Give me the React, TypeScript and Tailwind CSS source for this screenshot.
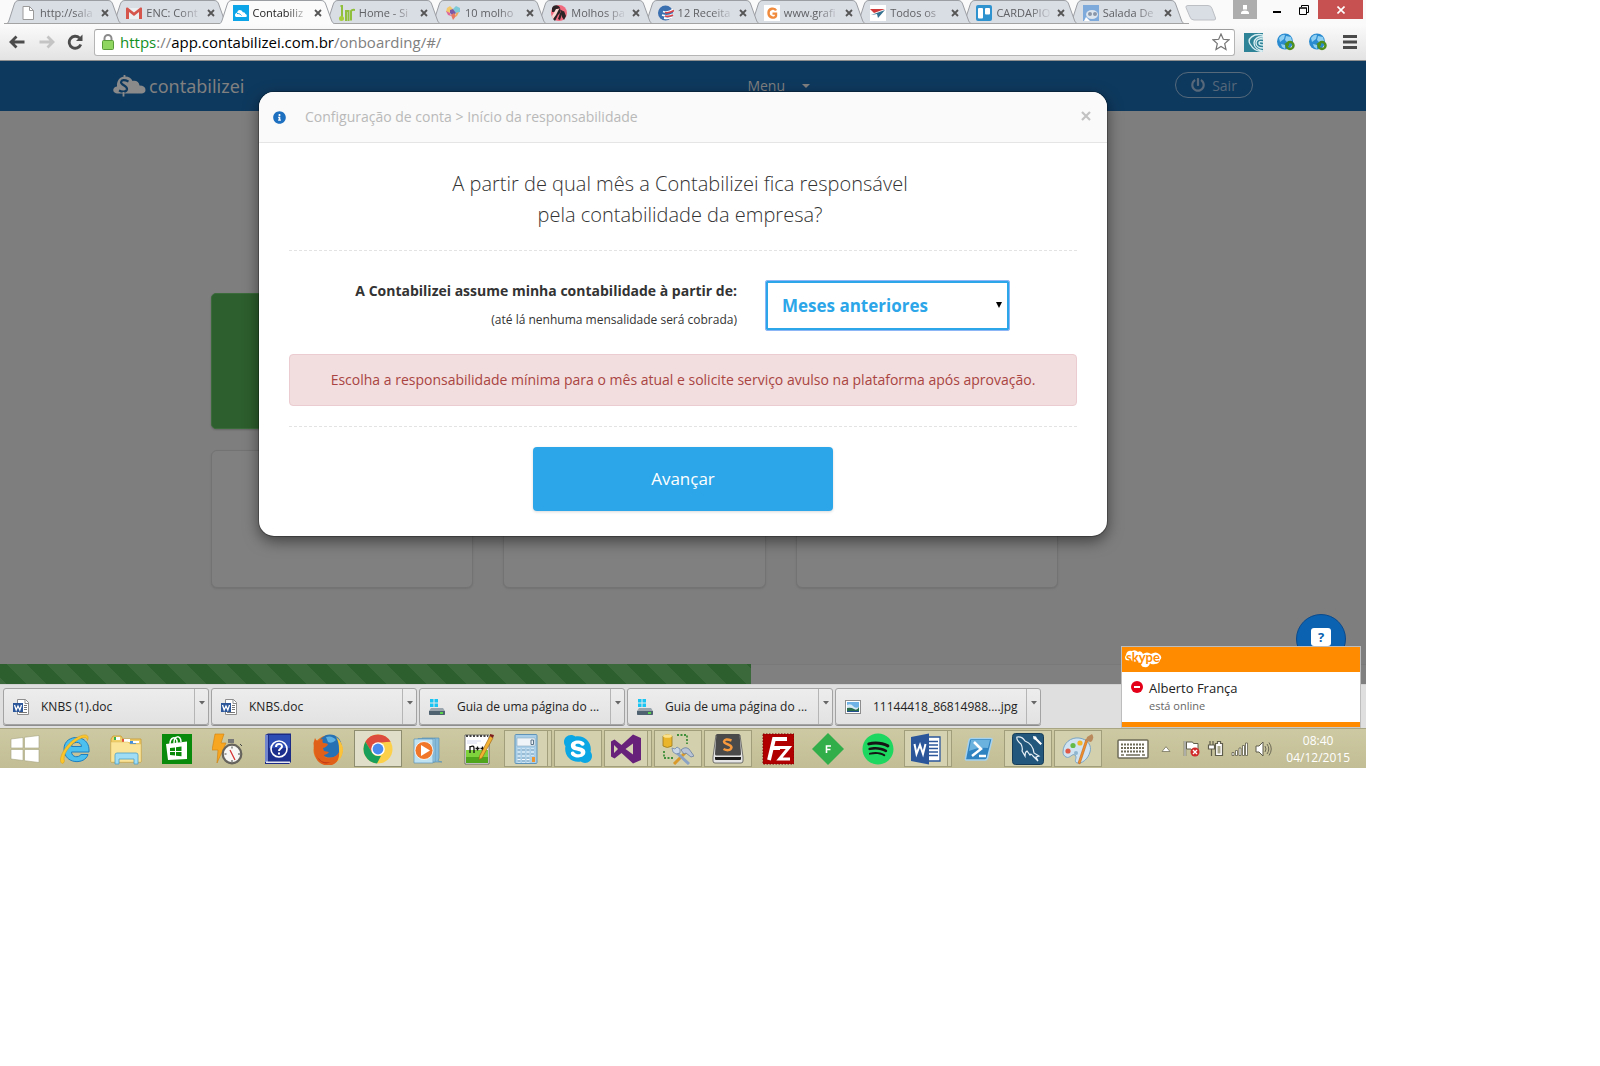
import type { ReactNode } from "react";
import { FaInfoCircle, FaPowerOff, FaSkype, FaSpotify } from "react-icons/fa";

/* ---------- favicons ---------- */

const Fav = ({ children }: { children: ReactNode }) => (
  <svg viewBox="0 0 16 16" className="size-4 shrink-0" aria-hidden="true">
    {children}
  </svg>
);

const favPage = (
  <Fav>
    <path d="M3 1.5h6.5L13.500 5.500v9H3z" fill="#fff" stroke="#9a9a9a" />
    <path d="M9.500 1.500v4h4" fill="none" stroke="#9a9a9a" />
  </Fav>
);
const favGmail = (
  <Fav>
    <path d="M1 3h14v11H1z" fill="#eceff1" />
    <path d="M0 14V3.500C0 2.500 1 2.200 2 2.800L8 7.500l6-4.700c1-.600 2-.300 2 .700V14h-3V7L8 11 3 7v7z" fill="#d5544c" />
  </Fav>
);
const favCloud = (
  <Fav>
    <path d="M0 0h16v16H0z" fill="#0da4e8" />
    <path d="M2 10.500C2 8 4 8 4.300 7.600 4.200 5.500 6.500 4 8.500 5.500c.5.500 1 1 1.300 1.700 1.700-.3 2.400.8 2.600 1.700C14 9 14.500 12 12.500 12H3.500c-.800 0-1.500-.6-1.500-1.500z" fill="#fff" />
    <path d="M4 8.500c2 0 3 .3 4.500 2" stroke="#0da4e8" fill="none" />
  </Fav>
);
const favBr = (
  <Fav>
    <path d="M3.500 1h-2M3 0v12M7 5v11M7 6h2.500v10M12 15.500V6q1-1.500 4-1" stroke="#8fbf3c" strokeWidth="2" fill="none" />
    <circle cx="2.500" cy="13.500" r="2.500" fill="#a6ce39" />
  </Fav>
);
const favHeart = (
  <Fav>
    <path d="M2 3l3-2 3 3-3 4-4-1z" fill="#f3c86a" />
    <path d="M8 4l3-3 4 2v4l-4 1z" fill="#7cc9d8" />
    <path d="M1 6l4 2 1 3-3-1z" fill="#e0679a" />
    <path d="M5 5l3-1 3 4-3 3-3-3z" fill="#7a5aa8" />
    <path d="M6 10l3-2 2 3-3 4z" fill="#e77763" />
    <path d="M11 8l3-1-2 4-2 1z" fill="#f0a85c" />
  </Fav>
);
const favWoman = (
  <Fav>
    <circle cx="8" cy="8" r="8" fill="#f0697c" />
    <path d="M1 3C3-1 8 0 9 3L6 4 4 7 1 7zM10 7l3-1 2 5-2 4-2-3z" fill="#2c2326" />
    <path d="M9 3l-4 4-3 7 2 2 3-6 3-3zM10 5l2 1-3 9-2-1z" fill="#2c2326" />
    <path d="M5 4l3 0-3 6-3 4-1-3z" fill="#fbd9d3" />
  </Fav>
);
const favGlobe = (
  <Fav>
    <circle cx="7.500" cy="8" r="7.500" fill="#3a6fb0" />
    <path d="M5 6.500q5 2 10-2M4 10q6 2 11-1M6 13q5 1 8-1" stroke="#fff" strokeWidth="1.800" fill="none" />
    <path d="M7 7.500q4 1 9-2M7 11q4 1 8-1" stroke="#d8434a" strokeWidth="1.600" fill="none" />
  </Fav>
);
const favG = (
  <Fav>
    <path d="M0 0h16v16H0z" fill="#fff" />
    <path d="M12 5.500C11 3 4.500 2.500 4.500 8c0 5.500 7 5.500 7.500 3V8.600H8.500" stroke="#f08a3c" strokeWidth="2.400" fill="none" />
  </Fav>
);
const favWing = (
  <Fav>
    <path d="M0 0h16v16H0z" fill="#fff" />
    <path d="M0 4h15L4 8z" fill="#d23b3b" />
    <path d="M1 10l14-5-7 8-1-4z" fill="#34708f" />
  </Fav>
);
const favTrello = (
  <Fav>
    <rect width="16" height="16" rx="2" fill="#2f93cf" />
    <rect x="2" y="3" width="5" height="10.500" rx="1" fill="#fff" />
    <rect x="9" y="3" width="5" height="6.500" rx="1" fill="#fff" />
  </Fav>
);
const favRobot = (
  <Fav>
    <path d="M0 0h16v16H0z" fill="#7eaadb" />
    <ellipse cx="9" cy="9.500" rx="6" ry="4.500" fill="#dce4ee" />
    <circle cx="7" cy="9" r="2" fill="#8b97a8" />
    <circle cx="12" cy="9" r="2" fill="#8b97a8" />
    <path d="M1 16l2-4 4 4z" fill="#fff" />
  </Fav>
);

/* ---------- browser tabs ---------- */

type Tab = { title: string; icon: ReactNode; z: string; active?: boolean };

const tabs: Tab[] = [
  { title: "http://sala", icon: favPage, z: "z-[11]" },
  { title: "ENC: Cont", icon: favGmail, z: "z-[10]" },
  { title: "Contabiliz", icon: favCloud, z: "z-[12]", active: true },
  { title: "Home - Si", icon: favBr, z: "z-[9]" },
  { title: "10 molho", icon: favHeart, z: "z-[8]" },
  { title: "Molhos pa", icon: favWoman, z: "z-[7]" },
  { title: "12 Receita", icon: favGlobe, z: "z-[6]" },
  { title: "www.grafi", icon: favG, z: "z-[5]" },
  { title: "Todos os", icon: favWing, z: "z-[4]" },
  { title: "CARDAPIO", icon: favTrello, z: "z-[3]" },
  { title: "Salada De", icon: favRobot, z: "z-[2]" },
];

function TabStrip() {
  return (
    <div className="flex h-6 items-start justify-between bg-[#fafafa]">
      <div className="flex min-w-0 flex-1 pl-1">
        <div className="flex max-w-[1169px] flex-1">
          {tabs.map((t) => (
            <div key={t.title} className={`relative flex h-6 min-w-0 flex-1 ${t.z}`}>
              <svg viewBox="0 0 122 24" className="absolute top-0 left-0 h-6 w-[122px]" aria-hidden="true">
                <path
                  d="M0 24.500C4 24 4.500 22 5.500 19L10 5C11 2 12 .5 15 .5H104C107 .5 108 2 109 5L114 19C115 22 116 24 120 24.500"
                  fill={t.active ? "#fbfbfb" : "#d9dde4"}
                  stroke="#9b9ea3"
                />
                {!t.active && <path d="M0 23.500h122" stroke="#a3a3a3" />}
              </svg>
              <div className="relative flex min-w-0 flex-1 items-center pt-0.5 pl-4">
                {t.icon}
                <button
                  className={`ml-1 w-14 shrink-0 text-left text-[11px] leading-5 whitespace-nowrap [mask-image:linear-gradient(to_right,black_60%,transparent_100%)] ${t.active ? "text-[#222]" : "text-[#5f6164]"}`}
                >
                  {t.title}
                </button>
                <button aria-label="Fechar guia" className="ml-[5px]">
                  <svg viewBox="0 0 8 8" className="size-2">
                    <path d="M1 1l6 6M7 1L1 7" stroke="#555" strokeWidth="1.800" />
                  </svg>
                </button>
              </div>
            </div>
          ))}
        </div>
        <button aria-label="Nova guia" className="ml-3 self-start pt-[5px]">
          <svg viewBox="0 0 32 16" className="h-4 w-8">
            <path d="M3 .5H23q3 0 4 3L30.500 13q.5 2-1.500 2H9q-3 0-4-3L1 2.500Q.5.500 3 .5z" fill="#d9dde4" stroke="#bcbfc4" />
          </svg>
        </button>
      </div>
      <div className="flex shrink-0 items-start pr-[3px]">
        <button aria-label="Perfil" className="flex h-[19px] w-6 items-center justify-center bg-[#adadad]">
          <svg viewBox="0 0 10 10" className="size-[10px]">
            <path d="M3 0h4v4.500H3zM1 8q0-2.500 4-2.500T9 8v1H1z" fill="#fff" />
          </svg>
        </button>
        <button aria-label="Minimizar" className="ml-4 flex h-[19px] w-2 items-end pb-[6px]">
          <span className="h-0.5 w-2 bg-black" />
        </button>
        <button aria-label="Restaurar" className="ml-[18px] flex h-[19px] items-center">
          <svg viewBox="0 0 10 10" className="size-[10px]">
            <path d="M2.500 2V.5h7v7H8M.5 3h7v6.500h-7z" fill="none" stroke="#000" />
            <path d="M0 3h8" stroke="#000" />
          </svg>
        </button>
        <button aria-label="Fechar" className="ml-[9px] flex h-[19px] w-[45px] items-center justify-center bg-[#c75050]">
          <svg viewBox="0 0 8 8" className="size-2">
            <path d="M.5.500l7 7M7.500.500l-7 7" stroke="#fff" strokeWidth="1.600" />
          </svg>
        </button>
      </div>
    </div>
  );
}

const GlobeExt = () => (
  <svg viewBox="0 0 20 18" className="h-[18px] w-5" aria-hidden="true">
    <circle cx="9" cy="8.500" r="8" fill="#2a8bd0" />
    <path d="M3 5q3-4 6-3l-1 4-4 3zM10 3l5 1 1 4-4 2-3-3zM5 11l4 1v4l-3-2z" fill="#8fd0f2" />
    <circle cx="14" cy="12.500" r="3.500" fill="none" stroke="#4f8f1f" strokeWidth="2.500" />
    <path d="M8 11l5-2v4z" fill="#4f8f1f" />
  </svg>
);

function Toolbar() {
  return (
    <div className="flex h-[37px] items-center border-b border-[#8f8f8f] bg-linear-to-b from-[#fbfbfb] to-[#e3e3e3] pr-[9px] pl-[9px]">
      <button aria-label="Voltar">
        <svg viewBox="0 0 16 14" className="h-[14px] w-4">
          <path d="M15.500 7H2M7.500 1.500L2 7l5.500 5.500" fill="none" stroke="#4c4c4c" strokeWidth="2.800" />
        </svg>
      </button>
      <button aria-label="Avançar página" className="ml-[14px]">
        <svg viewBox="0 0 16 14" className="h-[14px] w-4">
          <path d="M.5 7H14M8.500 1.500L14 7l-5.500 5.500" fill="none" stroke="#c4c4c4" strokeWidth="2.800" />
        </svg>
      </button>
      <button aria-label="Recarregar" className="ml-3">
        <svg viewBox="0 0 16 16" className="size-4">
          <path d="M13.800 10.500A6 6 0 1 1 12.500 4" fill="none" stroke="#4c4c4c" strokeWidth="2.800" />
          <path d="M15.500.500V7H9z" fill="#4c4c4c" />
        </svg>
      </button>
      <div className="ml-[11px] flex h-[27px] min-w-0 flex-1 items-center rounded-[3px] border border-[#b5b5b5] border-t-[#9c9c9c] bg-white pr-1 pl-1.5">
        <svg viewBox="0 0 14 16" className="h-4 w-[14px] shrink-0" aria-hidden="true">
          <path d="M3.500 8V4.500a3.500 3.500 0 0 1 7 0V8" fill="none" stroke="#8b8b8b" strokeWidth="2" />
          <rect x="1.500" y="6.500" width="11" height="9" rx="1" fill="#8ed660" stroke="#5a9b3a" />
        </svg>
        <div className="ml-[5px] min-w-0 flex-1 text-[15px] leading-6 whitespace-nowrap text-[#808080]">
          <span className="text-[#12901f]">https</span>://<span className="text-black">app.contabilizei.com.br</span>/onboarding/#/
        </div>
        <button aria-label="Favoritar">
          <svg viewBox="0 0 18 18" className="size-[18px]">
            <path d="M9 1l2.300 5.300 5.700.5-4.300 3.800 1.300 5.900L9 13.400l-5 3.100 1.300-5.900L1 6.800l5.700-.5z" fill="#fff" stroke="#757575" strokeWidth="1.200" />
          </svg>
        </button>
      </div>
      <button aria-label="Extensão" className="ml-[9px]">
        <svg viewBox="0 0 19 19" className="size-[19px]">
          <path d="M0 0h19v19H0z" fill="#2f8396" />
          <path d="M19 2C9 0 3 6 6 11s8 8 13 7c-5-1-9-4-9-8s4-7 9-6zM19 6c-4-1-7 1-7 4s3 5 7 5" fill="none" stroke="#d8eef2" strokeWidth="1.400" />
          <path d="M19 9q-4-1-4 1t4 2" fill="none" stroke="#d8eef2" strokeWidth="1.400" />
        </svg>
      </button>
      <button aria-label="Extensão web 1" className="ml-[13px]"><GlobeExt /></button>
      <button aria-label="Extensão web 2" className="ml-3"><GlobeExt /></button>
      <button aria-label="Menu do navegador" className="ml-[15px]">
        <svg viewBox="0 0 14 14" className="size-[14px]">
          <path d="M0 1.500h14M0 7h14M0 12.500h14" stroke="#4a4a4a" strokeWidth="2.800" />
        </svg>
      </button>
    </div>
  );
}

/* ---------- web page ---------- */

function NavBar() {
  return (
    <header className="flex h-[50px] items-center bg-[#0e395e] text-[14px] text-[#808080]">
      <a href="#inicio" className="ml-[113px] flex items-center">
        <svg viewBox="0 0 34 22" className="h-[22px] w-[34px]" aria-hidden="true">
          <path d="M5.500 18.500C1.500 18.500 0 16.500.3 14.500.7 12.500 2.500 11.500 4 11.500 3.500 5.500 7 1.500 12 1.500c4 0 6.500 2 7.500 4.500 4-.8 6.500 1.500 7 4.500 4 0 6 1.500 6 4.500 0 2.300-1.500 3.500-4 3.500H16z" fill="#8a8a8a" />
          <path d="M15.500 6.500Q9 3.500 8 7.200c-.3 3 6.500 3.300 6 7-.5 3-5 2.800-8 1.300" fill="none" stroke="#0e395e" strokeWidth="2.200" />
          <path d="M11.500 0v3M10.500 17v4.500" stroke="#8a8a8a" strokeWidth="1.800" />
        </svg>
        <span className="ml-0.5 font-['Noto_Sans',sans-serif] text-[18px] leading-6">contabilizei</span>
      </a>
      <div className="flex-1" />
      <button className="mr-[365px] flex items-center text-[14px] leading-5">
        Menu
        <svg viewBox="0 0 8 4" className="ml-[17px] h-1 w-2" aria-hidden="true">
          <path d="M0 0h8L4 4z" fill="#808080" />
        </svg>
      </button>
      <button className="mr-[113px] mb-0.5 flex h-[26px] w-[78px] items-center justify-center gap-[7px] rounded-full border border-[#55697b] text-[14px] text-[#56687a]">
        <FaPowerOff className="size-[14px]" />
        Sair
      </button>
    </header>
  );
}

function ResponsibilityDialog() {
  return (
    <div
      role="dialog"
      aria-labelledby="dialog-title"
      className="w-[848px] overflow-hidden rounded-[15px] bg-white shadow-[0_0_0_1px_rgba(0,0,0,0.25),0_5px_15px_rgba(0,0,0,0.5)]"
    >
      <div className="flex items-center border-b border-[#e5e5e5] bg-[#fafafa] pt-[15px] pr-[15px] pb-[15px] pl-[14px] text-[14px] leading-5 text-[#b9b9b9]">
        <FaInfoCircle className="size-[13px] text-[#1d6fc0]" />
        <h2 id="dialog-title" className="ml-[19px] flex-1">Configuração de conta &gt; Início da responsabilidade</h2>
        <button aria-label="Fechar janela" className="mr-px mb-0.5">
          <svg viewBox="0 0 10 10" className="size-[10px]">
            <path d="M1 1l8 8M9 1L1 9" stroke="#c2c2c2" strokeWidth="2.200" />
          </svg>
        </button>
      </div>
      <form className="px-[30px] pt-[25px] pb-[25px]" onSubmit={(e) => e.preventDefault()}>
        <p className="pr-1.5 text-center text-[20px] leading-[31px] font-light text-[#333]">
          A partir de qual mês a Contabilizei fica responsável
          <br />
          pela contabilidade da empresa?
        </p>
        <div className="mt-5 border-t border-dashed border-[#e3e3e3]" />
        <div className="mt-[30px] flex items-start gap-[29px]">
          <label htmlFor="mes" className="flex w-[448px] flex-col items-end text-[#333]">
            <span className="text-[14px] leading-5 font-bold">A Contabilizei assume minha contabilidade à partir de:</span>
            <span className="mt-[9px] text-[12px] leading-5">(até lá nenhuma mensalidade será cobrada)</span>
          </label>
          <div className="relative">
            <select
              id="mes"
              defaultValue="Meses anteriores"
              className="block h-[49px] w-[243px] appearance-none rounded-[1px] border-2 border-[#2ca6e8] bg-white pl-[14px] text-[17px] font-bold text-[#2ca6e8] outline-1 outline-[#8cb6f5]"
            >
              <option>Meses anteriores</option>
            </select>
            <svg viewBox="0 0 6 6" className="pointer-events-none absolute top-[21px] right-[7px] size-1.5" aria-hidden="true">
              <path d="M0 0h6L3 6z" fill="#000" />
            </svg>
          </div>
        </div>
        <div className="mt-6 rounded-[4px] border border-[#ebccd1] bg-[#f2dede] py-[15px] text-center text-[14px] leading-5 text-[#a94442]">
          Escolha a responsabilidade mínima para o mês atual e solicite serviço avulso na plataforma após aprovação.
        </div>
        <div className="mt-5 border-t border-dashed border-[#e3e3e3]" />
        <button className="mx-auto mt-5 block h-16 w-[300px] rounded-[4px] bg-[#2ca6e8] text-[17px] text-white shadow-[0_1px_3px_rgba(0,0,0,0.15)]">
          Avançar
        </button>
      </form>
    </div>
  );
}

const dimCard = "h-[138px] flex-1 rounded-[6px] border border-[#737373] bg-[#808080] shadow-[0_1px_2px_rgba(0,0,0,0.1)]";

function WebPage() {
  return (
    <div className="relative bg-[#7e7e7e]">
      <NavBar />
      <div className="px-[211px] pt-[182px]">
        <div className="w-[262px] rounded-[5px] border border-[#3b6a3b] bg-[#2d5e2d] pt-[134px] shadow-[0_1px_2px_rgba(0,0,0,0.2)]" />
        <div className="mt-[21px] mr-[97px] flex gap-[30px]">
          <div className={dimCard} />
          <div className={dimCard} />
          <div className={dimCard} />
        </div>
      </div>
      <div className="mt-[76px] flex h-5 border-t border-[#797979] bg-[#808080]">
        <div className="-mt-px w-[55%] bg-[#2d5e2d] bg-[linear-gradient(45deg,rgba(255,255,255,0.07)_25%,transparent_25%,transparent_50%,rgba(255,255,255,0.07)_50%,rgba(255,255,255,0.07)_75%,transparent_75%)] bg-size-[40px_40px] bg-position-[7px_0px]" />
      </div>
      <button
        aria-label="Ajuda"
        className="absolute right-5 bottom-5 flex size-[50px] items-center justify-center rounded-full border border-[#0a4a8c] bg-[#0a62b0] pb-[5px]"
      >
        <span className="rounded-[3px] bg-white px-[7px] text-[13px] leading-[18px] font-bold text-[#0a62b0]">?</span>
      </button>
      <div className="absolute inset-x-0 top-[31px] flex justify-center">
        <ResponsibilityDialog />
      </div>
    </div>
  );
}

/* ---------- downloads ---------- */

const docIcon = (
  <svg viewBox="0 0 16 16" className="size-4 shrink-0" aria-hidden="true">
    <path d="M4.500.500h8l3 3v12h-11z" fill="#fff" stroke="#8d8d8d" />
    <path d="M12 .5v4h3.500" fill="none" stroke="#8d8d8d" />
    <path d="M11 6.500h3M11 8.500h3M11 10.500h3M6 13.500h8" stroke="#777" />
    <rect x="0" y="4" width="10" height="9" fill="#2b579a" />
    <path d="M1.500 6l1.700 5L5 7l1.800 4 1.700-5" fill="none" stroke="#fff" strokeWidth="1.300" />
  </svg>
);
const driveIcon = (
  <svg viewBox="0 0 16 16" className="size-4 shrink-0" aria-hidden="true">
    <path d="M1 0h3.500v3.500H1zM5.500 0H9v3.500H5.500zM1 4.500h3.500V8H1zM5.500 4.500H9V8H5.500z" fill="#19c5f3" />
    <path d="M2 9h12l2 3v3q0 1-1 1H1q-1 0-1-1v-3z" fill="#9aa5ad" />
    <path d="M0 12h16v3q0 1-1 1H1q-1 0-1-1z" fill="#4f626f" />
    <path d="M11 14h3" stroke="#59d34c" strokeWidth="2" />
  </svg>
);
const photoIcon = (
  <svg viewBox="0 0 16 14" className="h-[14px] w-4 shrink-0" aria-hidden="true">
    <rect x=".5" y=".5" width="15" height="13" fill="#fff" stroke="#8d8d8d" />
    <path d="M2 2h12v10H2z" fill="#6fb3e6" />
    <path d="M2 5q4-2 6 1t6 1v5H2z" fill="#d7e9f5" />
    <path d="M2 8q4-1 7 1t5-2v5H2z" fill="#2a6d4d" />
    <path d="M2 11h12v1H2z" fill="#234e8f" />
  </svg>
);

const downloads = [
  { id: 1, name: "KNBS (1).doc", icon: docIcon },
  { id: 2, name: "KNBS.doc", icon: docIcon },
  { id: 3, name: "Guia de uma página do ...", icon: driveIcon },
  { id: 4, name: "Guia de uma página do ...", icon: driveIcon },
  { id: 5, name: "11144418_86814988....jpg", icon: photoIcon },
];

function DownloadBar() {
  return (
    <div className="flex h-11 items-center gap-0.5 border-t border-[#d2d2d2] bg-[#dfdfdf] pl-[3px]">
      {downloads.map((d) => (
        <div key={d.id} className="flex h-[37px] w-[206px] rounded-[3px] border border-[#a3a3a3] bg-linear-to-b from-[#ededed] to-[#e2e2e2] shadow-[0_1px_0_#8e8e8e]">
          <button className="flex min-w-0 flex-1 items-center gap-3 pl-[9px] text-[12px] leading-4 whitespace-nowrap text-[#222]">
            {d.icon}
            <span>{d.name}</span>
          </button>
          <button aria-label="Opções do download" className="flex w-[14px] justify-center border-l border-[#b5b5b5] pt-3">
            <svg viewBox="0 0 6 4" className="h-1 w-1.5">
              <path d="M0 0h6L3 3.500z" fill="#666" />
            </svg>
          </button>
        </div>
      ))}
    </div>
  );
}

/* ---------- taskbar ---------- */

const Ico = ({ children }: { children: ReactNode }) => (
  <svg viewBox="0 0 32 32" className="size-8 shrink-0" aria-hidden="true">
    {children}
  </svg>
);

type TaskApp = { name: string; icon: ReactNode; width?: string; frame?: "open" | "active" | "stack" };

const apps: TaskApp[] = [
  {
    name: "Iniciar",
    icon: (
      <Ico>
        <path d="M2 6l12-1.500V15H2zM15.500 4.300L30 2.500V15H15.500zM2 16.500h12V27.500L2 26zM15.500 16.500H30V29.500l-14.500-1.800z" fill="#fff" stroke="#a5a280" strokeWidth=".6" />
      </Ico>
    ),
  },
  {
    name: "Internet Explorer",
    icon: (
      <Ico>
        <path d="M30 19H12.500c.3 5.500 7 6 9.500 2.500h7c-3 10.500-24 10-24-5.500C5 .5 30 .5 30 17zM12.500 13.500h10c0-5.500-9.500-5.500-10 0z" fill="#4cc0ee" stroke="#1d7fc0" strokeWidth="1" />
        <path d="M3 30.500C-2 27 6 11 18 4.500c8-4.500 13-3 10.500 3-.5-4-4-3.500-9-1C10 12 3 23 5.500 28q-.5 2.500-2.500 2.500z" fill="#fbc62c" stroke="#d99c10" strokeWidth=".5" />
      </Ico>
    ),
  },
  {
    name: "Explorador de Arquivos",
    width: "w-[51px]",
    icon: (
      <Ico>
        <path d="M1 6l2-3h8l2 3h18v23H1z" fill="#f0cf6a" stroke="#c79b32" strokeWidth=".8" />
        <path d="M4 4h6v3H4z" fill="#35b24a" /><path d="M12 6h6v3h-6z" fill="#e2533d" /><path d="M20 8h6v3h-6z" fill="#3f8ee0" />
        <path d="M6 4h4v3H6zM14 6h6v3h-6zM23 8h6v2h-6z" fill="#fff" />
        <path d="M1 9h17l2 2h11v18H1z" fill="#f9e49a" stroke="#dcb858" strokeWidth=".5" />
        <path d="M5 31V22q0-2 2-2h19q2 0 2 2v9h-4v-5H9v5z" fill="#9fdcf5" stroke="#4d9fc6" strokeWidth=".8" />
      </Ico>
    ),
  },
  {
    name: "Loja",
    width: "w-[52px]",
    icon: (
      <Ico>
        <path d="M1 1h30v30H1z" fill="#0a8a0a" />
        <path d="M5 11l21-2.500V26L7 27z" fill="#fff" />
        <path d="M9 11c0-7 6-8 7-3v2M13 10c0-8 7-8 7-1" fill="none" stroke="#fff" strokeWidth="1.500" />
        <path d="M9 15l5-.6v3.600H9zM15 14.300l5.500-.7V18H15zM9 19h5v3.600l-5-.5zM15 19h5.500v4.300L15 22.700z" fill="#0a8a0a" />
      </Ico>
    ),
  },
  {
    name: "Cronômetro",
    icon: (
      <Ico>
        <path d="M3 1h9l-3 9h5L5 30l1-13H0z" fill="#f7a621" stroke="#d07f0c" strokeWidth=".6" />
        <path d="M16 6h6v4h-6z" fill="#777" />
        <circle cx="20" cy="21" r="9.300" fill="#f6f6f4" stroke="#65635c" strokeWidth="2.200" />
        <path d="M20 21l3 6M20 21l-2-4" stroke="#d53131" strokeWidth="1.300" />
        <path d="M20 13.500v2M20 27v2M12.500 21h2M26 21h2M28 11l2 2" stroke="#444" />
      </Ico>
    ),
  },
  {
    name: "Dicionário",
    icon: (
      <Ico>
        <path d="M3 2l3-1.500h23V29l-2 2H3z" fill="#1c2b86" />
        <path d="M7 2h21v26H7z" fill="#2d4cb4" /><path d="M7 15h21v13H7z" fill="#1d2f8e" />
        <path d="M3 2h3v27H3z" fill="#7185ce" /><path d="M4 28.500h24v1.500H4z" fill="#e8e8f0" />
        <circle cx="17" cy="16" r="8" fill="none" stroke="#fff" strokeWidth="1.600" />
        <path d="M14 14c0-4 6-4 6-.5 0 2-3 2-3 4.500M17 19.500v2" fill="none" stroke="#fff" strokeWidth="2" />
      </Ico>
    ),
  },
  {
    name: "Firefox",
    icon: (
      <Ico>
        <circle cx="16" cy="17" r="14.500" fill="#e8731c" />
        <circle cx="18" cy="13" r="11.500" fill="#2671b4" />
        <path d="M14 4q6-2 10 3-4 4-8 2z" fill="#5fb0e0" />
        <path d="M24 4q7 5 7 14-1 9-9 12 6-7 5-14 0-7-3-12z" fill="#fbc33a" />
        <path d="M1.500 10L3 5q1 3 3 3 2-2 5-2-1 2 0 4 3 0 5 1-1 3-5 4l1 3 5 1q-2 3-5 3 1 4 6 3 7-1 9-6 1 10-7 13-10 2-15-5-3-6-3.500-17z" fill="#e0601a" />
        <path d="M4 22q5 9 15 7-9 5-15-7z" fill="#c53a16" />
      </Ico>
    ),
  },
  {
    name: "Google Chrome",
    frame: "active",
    icon: (
      <Ico>
        <circle cx="16" cy="16" r="14.500" fill="#fdd04a" />
        <path d="M3.400 8.800A14.500 14.500 0 0 1 28.600 8.800L16 9.500 9.700 19.500z" fill="#dc4b3e" />
        <path d="M3.400 8.800L10 19.500q2 3.500 6 3.500h3l-4 7.500A14.500 14.500 0 0 1 3.400 8.800z" fill="#1a9f5b" />
        <path d="M28.600 8.800H16v.8z" fill="#dc4b3e" />
        <circle cx="16" cy="16" r="6.800" fill="#fff" /><circle cx="16" cy="16" r="5.400" fill="#4a8bf0" />
      </Ico>
    ),
  },
  {
    name: "Windows Media Player",
    icon: (
      <Ico>
        <path d="M10 5h17v20l-1 3 4 1H10z" fill="#86bbd9" stroke="#5c93b5" strokeWidth=".7" />
        <path d="M6 5.500h17V29H6z" fill="#9fd0ea" stroke="#5c93b5" strokeWidth=".7" />
        <path d="M2 6h19v24H2z" fill="#bfe2f3" stroke="#5c93b5" strokeWidth=".7" />
        <circle cx="12" cy="17.500" r="9" fill="#f0772a" stroke="#fff" strokeWidth=".8" />
        <path d="M9 12l9 5.500L9 23z" fill="#fff" />
      </Ico>
    ),
  },
  {
    name: "Notepad++",
    icon: (
      <Ico>
        <path d="M3 2h24v29H3z" fill="#fff" stroke="#555" strokeWidth=".8" />
        <path d="M4 17h22v13H4z" fill="#7fd23c" /><path d="M4 24h22v6H4z" fill="#4fa51c" />
        <path d="M4 3h22" stroke="#444" strokeDasharray="2 1.500" strokeWidth="2" />
        <path d="M5 8h14M5 10h10" stroke="#d4d8ee" />
        <path d="M8 20v-7M8 14q4-2 4 1v5M13.500 15.500h4M15.500 13.500v4M18.500 15.500h4M20.500 13.500v4" stroke="#111" strokeWidth="1.300" fill="none" />
        <path d="M28 3l3 2-11 20-3 1.500.5-3.500z" fill="#f1b233" stroke="#9c5f14" strokeWidth=".6" /><path d="M28 1l4 1-1 3-3-2z" fill="#7d1e1e" />
      </Ico>
    ),
  },
  {
    name: "Calculadora",
    frame: "stack",
    icon: (
      <Ico>
        <rect x="5" y="1.500" width="22" height="29" rx="1" fill="#a9cfe8" stroke="#5f93b8" />
        <path d="M7 5h18v8H7z" fill="#eef4f8" stroke="#8aa8bc" strokeWidth=".6" />
        <path d="M21 7h2.500v4.500H21z" fill="none" stroke="#5b7386" />
        <path d="M7.500 17h17M7.500 21h17M7.500 25h12M7.500 28h12" stroke="#f4fafd" strokeWidth="2.800" strokeDasharray="3 1.500" />
        <path d="M7.500 17h17M7.500 21h17M7.500 25h12M7.500 28h12" stroke="#3f7fac" strokeWidth="1" strokeDasharray="3 1.500" />
        <path d="M22 24h3v5h-3z" fill="#ef9530" />
      </Ico>
    ),
  },
  {
    name: "Skype",
    frame: "open",
    icon: (
      <span className="flex size-8 items-center justify-center bg-[radial-gradient(circle,#fff_40%,transparent_41%)]">
        <FaSkype className="size-8 text-[#0ba7e4]" />
      </span>
    ),
  },
  {
    name: "Visual Studio",
    frame: "stack",
    icon: (
      <Ico>
        <path d="M23 1.500L31 5v22l-8 3.500L11.500 20 4.500 25.500 1 23.500V8.500l3.500-2L11.500 12zM4 12v8l4-4zM23 10.500L15.500 16l7.500 5.500z" fill="#68217a" fillRule="evenodd" />
      </Ico>
    ),
  },
  {
    name: "Ferramentas de dados",
    frame: "open",
    icon: (
      <Ico>
        <path d="M1 3q4-3 9 0v10q-5 3-9 0z" fill="#eab52b" stroke="#9c7a1d" strokeWidth=".8" /><ellipse cx="5.500" cy="3" rx="4.500" ry="1.800" fill="#fbe18a" />
        <path d="M15 2h10v9M2 18v7h9" fill="none" stroke="#3f8f3a" strokeWidth="1.800" strokeDasharray="2 1.500" />
        <path d="M12 31L24 19" stroke="#d9992b" strokeWidth="3" /><path d="M14 19l13 12" stroke="#8aa2c4" strokeWidth="3" />
        <path d="M10 15l3 1 2-2 3 2v4l-4 1-3-2z" fill="#c9d6e8" stroke="#7289aa" strokeWidth=".8" />
        <path d="M19 17q4-4 8-1l5 7-3 1-5-4-2 1z" fill="#b9c5d6" stroke="#6a7f9e" strokeWidth=".8" />
      </Ico>
    ),
  },
  {
    name: "Sublime Text",
    frame: "open",
    icon: (
      <Ico>
        <path d="M4 2h24l3 22v4q0 2-2 2H3q-2 0-2-2v-4z" fill="#e4e4e4" stroke="#555" strokeWidth=".8" />
        <path d="M3 24h26v2q0 1-1 1H4q-1 0-1-1z" fill="#1c1c1c" />
        <path d="M5.500 1h21q1 0 1.200 1.200L29 21q0 1.500-1.500 1.500h-23Q3 22.500 3 21L4.300 2.200Q4.500 1 5.500 1z" fill="#4a4a4a" />
        <path d="M19.500 7.500q-6.500-2.500-7.500 1c0 3 7.500 2.500 7.500 6-1 3.500-5 3-8 1.500" fill="none" stroke="#f79a3e" strokeWidth="2.500" />
      </Ico>
    ),
  },
  {
    name: "FileZilla",
    icon: (
      <Ico>
        <path d="M1 1h31v30H1z" fill="#b00000" stroke="#7d0000" strokeDasharray="1.500 1.500" />
        <path d="M7 27l5-21h13M9 15h9" stroke="#fff" strokeWidth="3.800" fill="none" />
        <path d="M17 14.500h10L17.500 26H28" stroke="#fff" strokeWidth="3" fill="none" />
      </Ico>
    ),
  },
  {
    name: "Feeder",
    icon: (
      <Ico>
        <path d="M16 0l16 16-16 16L0 16z" fill="#31ae49" />
        <path d="M14.500 20v-7H19M14.500 16.500h4" stroke="#fff" strokeWidth="1.600" fill="none" />
      </Ico>
    ),
  },
  {
    name: "Spotify",
    icon: (
      <span className="flex size-8 items-center justify-center rounded-full bg-[radial-gradient(circle,#151515_60%,transparent_61%)]">
        <FaSpotify className="size-8 text-[#1ed760]" />
      </span>
    ),
  },
  {
    name: "Word",
    frame: "stack",
    icon: (
      <Ico>
        <path d="M16 4h14v24H16z" fill="#fff" stroke="#2b579a" strokeWidth="1.300" />
        <path d="M18 8.500h10M18 12h10M18 15.500h10M18 19h10M18 22.500h10" stroke="#2b579a" strokeWidth="1.300" />
        <path d="M1 4l18-3.500v31L1 28z" fill="#2b579a" />
        <path d="M4.500 11l2 10L10 12l3 9 2.500-10" stroke="#fff" strokeWidth="2" fill="none" />
      </Ico>
    ),
  },
  {
    name: "PowerShell",
    icon: (
      <Ico>
        <path d="M9 5.500h20q1.500 0 1 1.500l-4.500 18q-.5 2-2.500 2H4.500q-1.500 0-1-1.500L7 7.500q.5-2 2-2z" fill="#2f83c0" stroke="#a5d2ee" strokeWidth="1.500" />
        <path d="M9 7h19L26 15q-10-1-19 3z" fill="#6cb2de" />
        <path d="M12 9l7 7-9 7M17 23h7" stroke="#fff" strokeWidth="2.500" fill="none" />
      </Ico>
    ),
  },
  {
    name: "MySQL Workbench",
    frame: "open",
    icon: (
      <Ico>
        <rect x=".5" y=".5" width="31" height="31" rx="3" fill="#24577c" stroke="#173c57" />
        <path d="M5 4q5-1 8 4 8 3 9 12l5 3-3 1 2 4-5-5q-2-3-3-1l-3-4q-2 1-2 5l-3-5q1-3-1-7Q4 7 5 4z" fill="none" stroke="#e8f1f7" strokeWidth="1.200" />
        <path d="M21 3l3 .5 1 2 5 5-1.500 1.500-5-5-2-1z" fill="#fff" />
      </Ico>
    ),
  },
  {
    name: "Paint",
    frame: "open",
    icon: (
      <Ico>
        <path d="M1 19C1 10 9 4 17 5c9 1 13 8 11 14-2 7-8 12-13 11-4-2 1-5-2-8-3-2-5 4-9 2-2-1-3-3-3-5z" fill="#cfe3f1" stroke="#7ba5c4" />
        <circle cx="6" cy="18" r="2.600" fill="#e05a48" /><circle cx="11" cy="12.500" r="2.600" fill="#66bb48" /><circle cx="18" cy="10" r="2.600" fill="#f2b52c" />
        <circle cx="14" cy="20" r="2" fill="#8fb6d0" />
        <path d="M26 7L18 31l-2-1 8-24z" fill="#ee8d2c" stroke="#b9601a" strokeWidth=".5" />
        <path d="M24 8l1-4 5-3q3 4-1 8z" fill="#bb8a5c" />
      </Ico>
    ),
  },
];

function Taskbar() {
  return (
    <div className="flex h-10 items-stretch border-t border-[#a9a683] bg-linear-to-b from-[#cdc9a2] to-[#c2bd94]">
      <nav className="flex" aria-label="Aplicativos">
        {apps.map((a) => (
          <button key={a.name} aria-label={a.name} className={`flex items-stretch p-px ${a.width ?? "w-[50px]"}`}>
            {a.frame === "stack" ? (
              <>
                <span className="flex flex-1 items-center justify-center border border-[#a19e7c] bg-[#d5d2b2]">{a.icon}</span>
                <span className="w-1 border-y border-r border-[#a19e7c] bg-[#d0cdab]" />
              </>
            ) : (
              <span
                className={`flex flex-1 items-center justify-center border ${
                  a.frame === "active"
                    ? "border-[#8f8d70] bg-[#e0dec9]"
                    : a.frame === "open"
                      ? "border-[#a19e7c] bg-[#d3d0ae]"
                      : "border-transparent"
                }`}
              >
                {a.icon}
              </span>
            )}
          </button>
        ))}
      </nav>
      <div className="ml-auto flex items-center">
        <button aria-label="Teclado virtual">
          <svg viewBox="0 0 32 20" className="h-5 w-8">
            <rect x="1" y="1" width="30" height="18" rx="1" fill="#fff" stroke="#6e6c58" strokeWidth="1.500" />
            <path d="M4 5.500h24M4 9h24M4 12.500h24" stroke="#6e6c58" strokeWidth="2.200" strokeDasharray="2 1" />
            <path d="M4 16h3M9 16h14M25 16h3" stroke="#6e6c58" strokeWidth="1.500" />
          </svg>
        </button>
        <button aria-label="Mostrar ícones ocultos" className="ml-3">
          <svg viewBox="0 0 10 6" className="h-1.5 w-[10px]">
            <path d="M5 .7L9 5.500H1z" fill="#fff" stroke="#77755e" strokeWidth=".8" />
          </svg>
        </button>
        <button aria-label="Central de ações" className="ml-3">
          <svg viewBox="0 0 17 17" className="size-[17px]">
            <path d="M2 1v15" stroke="#5f5d4c" strokeWidth="2.500" /><path d="M2 1v15" stroke="#fff" />
            <path d="M3.500 2h6l1 1.500H15v7H9l-1-1.500H3.500z" fill="#fff" stroke="#5f5d4c" />
            <circle cx="12" cy="12" r="4.500" fill="#d12a2a" /><path d="M10 10l4 4M14 10l-4 4" stroke="#fff" strokeWidth="1.400" />
          </svg>
        </button>
        <button aria-label="Bateria" className="ml-[7px]">
          <svg viewBox="0 0 17 17" className="size-[17px]">
            <path d="M3 1v4M6 1v4M1.500 5h6v4h-6zM4.500 9v7" fill="#fff" stroke="#5f5d4c" strokeWidth="1.200" />
            <path d="M8.500 3.500h2v-2h3v2h2v12h-7z" fill="#fff" stroke="#5f5d4c" strokeWidth="1.200" /><path d="M10.500 6h3v7.500h-3z" fill="#aaa88c" />
          </svg>
        </button>
        <button aria-label="Rede sem fio" className="ml-[7px]">
          <svg viewBox="0 0 17 14" className="h-[14px] w-[17px]">
            <path d="M1 10.500h2v3H1zM4.500 8.500h2v5h-2zM8 6h2v7.500H8zM11.500 3.500h2v10h-2zM14.500 1h2v12.500h-2z" fill="#fff" stroke="#5f5d4c" strokeWidth=".8" />
          </svg>
        </button>
        <button aria-label="Volume" className="ml-[7px]">
          <svg viewBox="0 0 17 16" className="h-4 w-[17px]">
            <path d="M1 5h3l4-4v14l-4-4H1z" fill="#fff" stroke="#5f5d4c" />
            <path d="M10 5q2 3 0 6M12 3q3.500 5 0 10M14 1.500q4.500 6.500 0 13" fill="none" stroke="#6b6956" />
          </svg>
        </button>
        <div className="mr-4 ml-[14px] text-center text-[12px] leading-[17px] text-white">
          08:40
          <br />
          04/12/2015
        </div>
      </div>
    </div>
  );
}

function SkypeToast() {
  return (
    <div className="absolute right-[5px] bottom-10 w-[240px] border border-[#bdbdbd] border-b-[#c9c9c9] bg-white">
      <div className="h-[25px] bg-[#ff8c00] px-[3px] pt-[3px]">
        <svg viewBox="0 0 37 18" className="h-[18px] w-[37px]" role="img" aria-label="skype">
          <path d="M1 5Q2 0 7 1q3-2 6 1 3-2 5 2 4-3 8 0 5-3 8 0 4 3 1 6-1 4-5 4-4 1-5-1-1 5-6 4-3 0-3-4-3 0-4-2-4 2-6-1-6 2-6-3z" fill="#fff" />
          <text x="18" y="12" textAnchor="middle" fontFamily="Lato, sans-serif" fontSize="13" fontWeight="700" fill="#ff8c00">skype</text>
        </svg>
      </div>
      <div className="flex items-start gap-[6px] px-[9px] pt-[7px] pb-[7px]">
        <svg viewBox="0 0 12 12" className="mt-0.5 size-3" aria-hidden="true">
          <circle cx="6" cy="6" r="6" fill="#e5001a" />
          <path d="M3 6h6" stroke="#fff" strokeWidth="2" />
        </svg>
        <div>
          <p className="text-[13px] leading-[18px] text-[#222]">Alberto França</p>
          <p className="text-[11px] leading-[18px] text-[#666]">está online</p>
        </div>
      </div>
      <div className="h-[5px] bg-[#ff8c00]" />
    </div>
  );
}

export default function App() {
  return (
    <div className="min-h-screen bg-white font-['Open_Sans','Noto_Sans',sans-serif]">
      <div className="relative mr-[234px] overflow-hidden">
        <TabStrip />
        <Toolbar />
        <WebPage />
        <DownloadBar />
        <Taskbar />
        <SkypeToast />
      </div>
    </div>
  );
}
